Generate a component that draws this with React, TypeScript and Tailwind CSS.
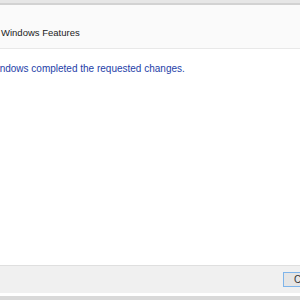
import React from "react";

export default function App() {
    return (
        <div className="w-[300px] h-[300px] overflow-hidden flex flex-col bg-white font-['Liberation_Sans',Arial,sans-serif]">
            {/* window chrome top */}
            <div className="h-[3px] bg-[#e6e6e6]" />
            <div className="h-[2px] bg-[#d2d2d2]" />
            {/* header */}
            <div className="h-[43px] bg-[#fafafa] flex items-end pb-[9px] pl-[1px]">
                <span className="text-[9.5px] leading-[12px] text-[#222]">Windows Features</span>
            </div>
            <div className="h-[1px] bg-[#e8e8e8]" />
            {/* content */}
            <div className="flex-1 bg-white pt-[14px]">
                <p className="ml-[-12px] whitespace-nowrap text-[10px] leading-[12px] text-[#1e3ea8]">
                    Windows completed the requested changes.
                </p>
            </div>
            {/* footer */}
            <div className="h-[1px] bg-[#dfdfdf]" />
            <div className="h-[27px] bg-[#f0f0f0] flex items-start justify-end pt-[6px]">
                <button className="w-[60px] h-[15px] mr-[-43px] border border-[#7eb4ea] bg-[#e5e5e5] text-left pl-[10px] text-[10px] leading-[12px] text-[#333]">
                    Close
                </button>
            </div>
            <div className="h-[3px] bg-white" />
            <div className="h-[4px] bg-[#d9d9d9]" />
        </div>
    );
}
